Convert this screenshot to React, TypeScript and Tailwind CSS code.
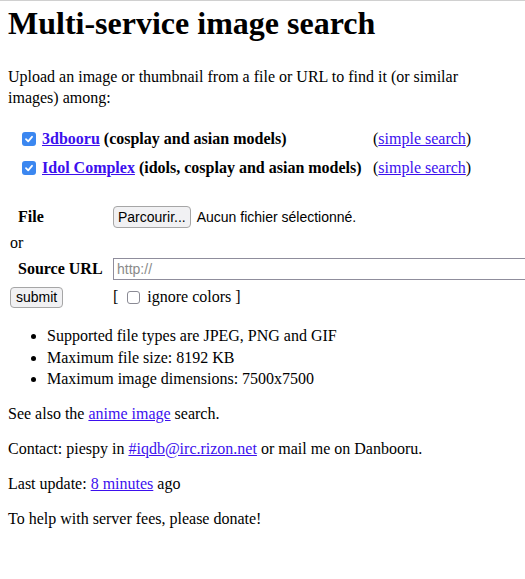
import React from "react";

const Check = () => (
  <span className="inline-flex items-center justify-center w-[14px] h-[14px] rounded-[3px] bg-[#3b87f0] align-middle">
    <svg width="10" height="10" viewBox="0 0 10 10" fill="none">
      <path d="M2 5.2 L4.2 7.3 L8 2.8" stroke="white" strokeWidth="1.8" strokeLinecap="round" strokeLinejoin="round" />
    </svg>
  </span>
);

const link = "text-[#3c10ee] underline";

const App = () => {
  return (
    <div className="w-[525px] h-[579px] overflow-hidden bg-white text-black border-t border-[#d0d0d0] font-['Liberation_Serif','Times_New_Roman',serif] text-[16px]">
      <div className="px-2">
        <h1 className="text-[32px] font-bold leading-[37px] pt-[4px]">Multi-service image search</h1>
        <p className="mt-[24px] leading-[21px] pr-[50px]">
          Upload an image or thumbnail from a file or URL to find it (or similar images) among:
        </p>

        <div className="mt-[16px] ml-[14px] grid grid-cols-[351px_auto] auto-rows-[29px] items-center font-bold">
          <div className="flex items-center gap-[6px]">
            <Check />
            <span>
              <a className={link}>3dbooru</a> (cosplay and asian models)
            </span>
          </div>
          <div className="font-normal">
            (<a className={link}>simple search</a>)
          </div>
          <div className="flex items-center gap-[6px]">
            <Check />
            <span>
              <a className={link}>Idol Complex</a> (idols, cosplay and asian models)
            </span>
          </div>
          <div className="font-normal">
            (<a className={link}>simple search</a>)
          </div>
        </div>

        <div className="mt-[22px] flex flex-col">
          <div className="flex items-center h-[26px]">
            <span className="w-[105px] shrink-0 whitespace-nowrap pl-[10px] font-bold">File</span>
            <span className="flex items-center gap-[6px] whitespace-nowrap font-['Liberation_Sans',Arial,sans-serif] text-[14px]">
              <span className="px-[4px] h-[22px] flex items-center rounded-[4px] border border-[#a6a6a6] bg-[#f1f1f3]">Parcourir...</span>
              Aucun fichier sélectionné.
            </span>
          </div>
          <div className="h-[26px] flex items-center pl-[2px]">or</div>
          <div className="flex items-center h-[26px]">
            <span className="w-[105px] shrink-0 whitespace-nowrap pl-[10px] font-bold">Source URL</span>
            <span className="w-[440px] h-[22px] flex items-center border border-[#8f8d9c] pl-[3px] font-['Liberation_Sans',Arial,sans-serif] text-[14px] text-[#8a8a8a] shrink-0">
              http://
            </span>
          </div>
          <div className="flex items-center h-[30px]">
            <span className="w-[105px] shrink-0 pl-[2px]">
              <span className="inline-flex items-center px-[5px] h-[21px] rounded-[4px] border border-[#a6a6a6] bg-[#f1f1f3] font-['Liberation_Sans',Arial,sans-serif] text-[14px]">submit</span>
            </span>
            <span className="flex items-center whitespace-nowrap">
              [
              <span className="ml-[9px] mr-[7px] w-[13px] h-[13px] rounded-[3px] border border-[#8a8a94] bg-white"></span>
              ignore colors ]
            </span>
          </div>
        </div>

        <ul className="mt-[13px] pl-[39px] list-disc leading-[21.5px]">
          <li>Supported file types are JPEG, PNG and GIF</li>
          <li>Maximum file size: 8192 KB</li>
          <li>Maximum image dimensions: 7500x7500</li>
        </ul>

        <p className="mt-[14px] leading-[19px]">
          See also the <a className={link}>anime image</a> search.
        </p>
        <p className="mt-[16px] leading-[19px]">
          Contact: piespy in <a className={link}>#iqdb@irc.rizon.net</a> or mail me on Danbooru.
        </p>
        <p className="mt-[16px] leading-[19px]">
          Last update: <a className={link}>8 minutes</a> ago
        </p>
        <p className="mt-[16px] leading-[19px]">To help with server fees, please donate!</p>
      </div>
    </div>
  );
};

export default App;
